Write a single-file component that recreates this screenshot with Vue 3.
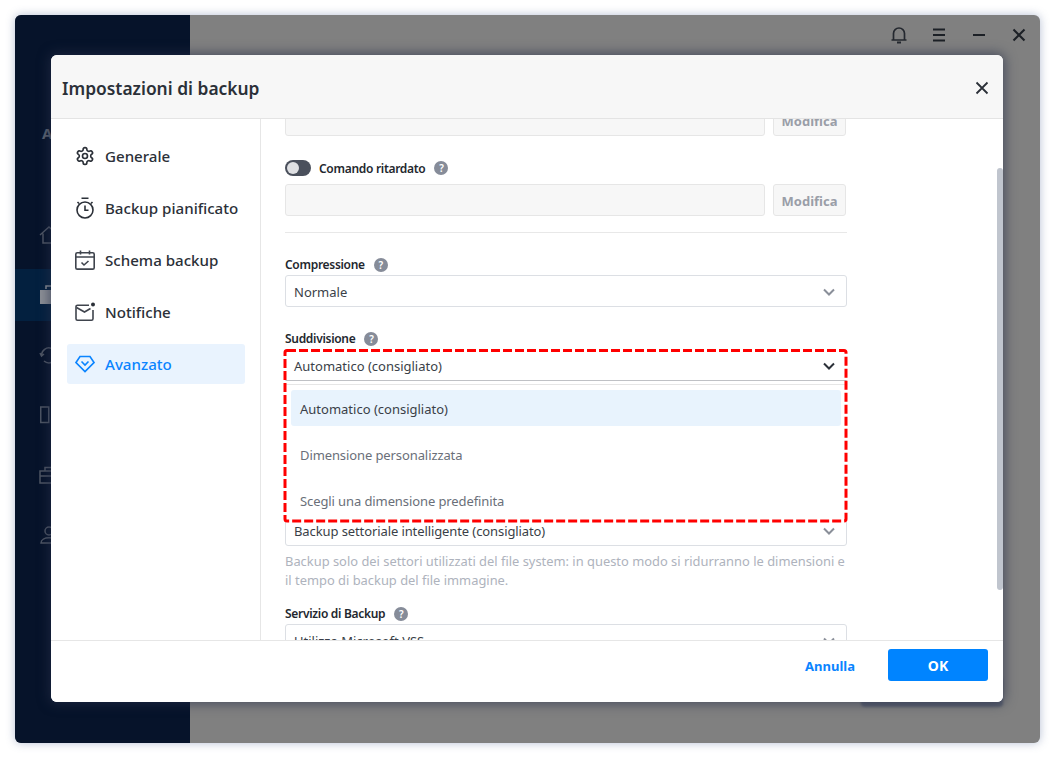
<script setup>
const options = ['Automatico (consigliato)', 'Dimensione personalizzata', 'Scegli una dimensione predefinita']
</script>

<template>
  <div class="page">
    <div class="window">
      <aside class="rail">
        <div class="brand">A</div>
        <nav class="rail-nav">
          <div class="rail-item">
            <svg width="20" height="20" viewBox="0 0 20 20" fill="none" stroke="#4d5563" stroke-width="1.5"><path d="M1 10 10 2l9 8M4 8.500V18h12V8.500"/></svg>
          </div>
          <div class="rail-item">
            <div class="rail-active">
              <svg width="22" height="20" viewBox="0 0 22 20"><path d="M1 5h20v14H1z" fill="#8b8f96"/><path d="M7 4V1h8v3" fill="none" stroke="#8b8f96" stroke-width="1.500"/></svg>
            </div>
          </div>
          <div class="rail-item">
            <svg width="20" height="20" viewBox="0 0 20 20" fill="none" stroke="#4d5563" stroke-width="1.500"><path d="M2.500 10a7.500 7.500 0 1 1 2.500 6M1 8l1.500 3L5 9"/></svg>
          </div>
          <div class="rail-item">
            <svg width="20" height="20" viewBox="0 0 20 20" fill="none" stroke="#4d5563" stroke-width="1.500"><rect x="1.750" y="2" width="8" height="15.500"/></svg>
          </div>
          <div class="rail-item">
            <svg width="20" height="20" viewBox="0 0 20 20" fill="none" stroke="#4d5563" stroke-width="1.500"><rect x="1" y="6" width="18" height="12"/><path d="M6 6V2.500h8V6M1 11h18"/></svg>
          </div>
          <div class="rail-item">
            <svg width="20" height="20" viewBox="0 0 20 20" fill="none" stroke="#4d5563" stroke-width="1.500"><circle cx="10" cy="6" r="4"/><path d="M2 18c0-7 16-7 16 0z"/></svg>
          </div>
        </nav>
      </aside>

      <main class="backdrop">
        <div class="topbar">
          <svg width="20" height="20" viewBox="0 0 20 20" fill="none" stroke="#24282f" stroke-width="1.700"><path d="M4.500 14.500V8.500a5.500 5.500 0 0 1 11 0v6M2.500 15h15"/><path d="M8 17.500h4" stroke-width="2"/></svg>
          <svg width="20" height="20" viewBox="0 0 20 20" stroke="#1c2026" stroke-width="1.900"><path d="M4 4.500h12M4 10h12M4 15.500h12"/></svg>
          <svg width="20" height="20" viewBox="0 0 20 20" stroke="#1c2026" stroke-width="1.900"><path d="M4 10h12"/></svg>
          <svg width="20" height="20" viewBox="0 0 20 20" stroke="#1c2026" stroke-width="2.100"><path d="M4.500 4.500l11 11M15.500 4.500l-11 11"/></svg>
        </div>
        <div class="under-button"></div>
      </main>

      <section class="dialog">
        <header class="dialog-head">
          <h1>Impostazioni di backup</h1>
          <svg width="14" height="14" viewBox="0 0 14 14" stroke="#2b3038" stroke-width="1.800"><path d="M1.500 1.500l11 11M12.500 1.500l-11 11"/></svg>
        </header>

        <div class="dialog-body">
          <ul class="menu">
            <li class="menu-item">
              <svg width="20" height="20" viewBox="0 0 24 24" fill="none" stroke="#2b3038" stroke-width="2"><path d="M12.220 2h-.44a2 2 0 0 0-2 2v.18a2 2 0 0 1-1 1.730l-.43.25a2 2 0 0 1-2 0l-.15-.08a2 2 0 0 0-2.730.73l-.22.38a2 2 0 0 0 .73 2.730l.15.1a2 2 0 0 1 1 1.720v.51a2 2 0 0 1-1 1.740l-.15.09a2 2 0 0 0-.73 2.730l.22.38a2 2 0 0 0 2.730.73l.15-.08a2 2 0 0 1 2 0l.43.25a2 2 0 0 1 1 1.730V20a2 2 0 0 0 2 2h.44a2 2 0 0 0 2-2v-.18a2 2 0 0 1 1-1.730l.43-.25a2 2 0 0 1 2 0l.15.08a2 2 0 0 0 2.730-.73l.22-.39a2 2 0 0 0-.73-2.730l-.15-.08a2 2 0 0 1-1-1.740v-.5a2 2 0 0 1 1-1.740l.15-.09a2 2 0 0 0 .73-2.730l-.22-.38a2 2 0 0 0-2.730-.73l-.15.08a2 2 0 0 1-2 0l-.43-.25a2 2 0 0 1-1-1.730V4a2 2 0 0 0-2-2z"/><circle cx="12" cy="12" r="3"/></svg>
              Generale
            </li>
            <li class="menu-item">
              <svg width="20" height="22" viewBox="0 0 20 22" fill="none" stroke="#2b3038" stroke-width="1.600"><circle cx="10" cy="13" r="8"/><path d="M6.500 1.250h7M10 8.500v4.750h3.500M2.500 5l1.500 1.500M17.500 5L16 6.500"/></svg>
              Backup pianificato
            </li>
            <li class="menu-item">
              <svg width="20" height="20" viewBox="0 0 20 20" fill="none" stroke="#3f444d" stroke-width="1.600"><rect x=".8" y="2.750" width="18.400" height="16.400" rx="1.500"/><path d="M.8 7h18.400M5.500 .5v4M14.500 .5v4M6.500 12.500l2.500 2.500 4.500-4"/></svg>
              Schema backup
            </li>
            <li class="menu-item">
              <svg width="20" height="20" viewBox="0 0 20 20" fill="none" stroke="#3f444d" stroke-width="1.600"><path d="M14 3.250H2.500a1.500 1.500 0 0 0-1.500 1.500v12a1.500 1.500 0 0 0 1.500 1.500h14a1.500 1.500 0 0 0 1.500-1.500V8"/><path d="M1.500 5.500l8 4.500 6-3.500"/><circle cx="18" cy="2.500" r="2" fill="#2b3038" stroke="none"/></svg>
              Notifiche
            </li>
            <li class="menu-item active">
              <svg width="20" height="20" viewBox="0 0 20 20" fill="none" stroke="#0a84ff" stroke-width="1.600"><path d="M5 2.500h10L19 8.500 10 17.500 1 8.500z"/><path d="M6.500 7.500L10 11l3.500-3.500"/></svg>
              Avanzato
            </li>
          </ul>

          <div class="content">
            <div class="scroller">
              <div class="input-row first">
                <div class="input"></div>
                <button class="edit">Modifica</button>
              </div>

              <div class="field-label toggle-row">
                <span class="toggle"><i></i></span>
                <span>Comando ritardato</span>
                <span class="help">?</span>
              </div>
              <div class="input-row">
                <div class="input"></div>
                <button class="edit">Modifica</button>
              </div>
              <hr class="rule" />

              <div class="field-label section">
                <span>Compressione</span>
                <span class="help">?</span>
              </div>
              <div class="select">
                <span>Normale</span>
                <svg class="chev" width="12" height="8" viewBox="0 0 12 8" fill="none" stroke="#8a8f99" stroke-width="2"><path d="M1 1.500l5 5 5-5"/></svg>
              </div>

              <div class="field-label section">
                <span>Suddivisione</span>
                <span class="help">?</span>
              </div>
              <div class="dropdown-wrap">
                <div class="select open">
                  <span>Automatico (consigliato)</span>
                  <svg class="chev" width="12" height="8" viewBox="0 0 12 8" fill="none" stroke="#2b3038" stroke-width="2"><path d="M1 1.500l5 5 5-5"/></svg>
                </div>
                <ul class="dropdown">
                  <li v-for="(o, i) in options" :key="o" :class="{ current: i === 0 }">{{ o }}</li>
                </ul>
                <svg class="highlight" width="566" height="175" viewBox="0 0 566 175" fill="none" stroke="#f00" stroke-width="3" stroke-dasharray="9 3"><rect x="2" y="1.500" width="561" height="170.500" rx="2"/></svg>
              </div>

              <div class="select after-menu">
                <span>Backup settoriale intelligente (consigliato)</span>
                <svg class="chev" width="12" height="8" viewBox="0 0 12 8" fill="none" stroke="#8a8f99" stroke-width="2"><path d="M1 1.500l5 5 5-5"/></svg>
              </div>
              <p class="hint">Backup solo dei settori utilizzati del file system: in questo modo si ridurranno le dimensioni e il tempo di backup del file immagine.</p>

              <div class="field-label service">
                <span>Servizio di Backup</span>
                <span class="help">?</span>
              </div>
              <div class="select">
                <span>Utilizza Microsoft VSS</span>
                <svg class="chev" width="12" height="8" viewBox="0 0 12 8" fill="none" stroke="#8a8f99" stroke-width="2"><path d="M1 1.500l5 5 5-5"/></svg>
              </div>
            </div>
            <div class="scrollbar"></div>
          </div>
        </div>

        <footer class="dialog-foot">
          <button class="cancel">Annulla</button>
          <button class="ok">OK</button>
        </footer>
      </section>
    </div>
  </div>
</template>

<style>
html, body { margin: 0; background: #fff; }
</style>

<style scoped>
* { box-sizing: border-box; }
.page {
  width: 1055px;
  height: 758px;
  padding: 15px;
  overflow: hidden;
  font-family: "Noto Sans", "Open Sans", sans-serif;
  color: #2b3038;
}
.window {
  position: relative;
  width: 1025px;
  height: 728px;
  display: flex;
  border-radius: 6px;
  overflow: hidden;
  box-shadow: 0 0 10px rgba(95, 115, 160, .45);
  background: #808080;
}
.rail {
  width: 175px;
  flex: none;
  background: #06132a;
  padding-top: 106px;
}
.brand {
  padding-left: 27px;
  height: 24px;
  line-height: 24px;
  font-size: 15px;
  font-weight: 700;
  color: #5a626f;
}
.rail-nav {
  margin-top: 60px;
  display: flex;
  flex-direction: column;
}
.rail-item {
  height: 60px;
  display: flex;
  align-items: center;
  padding-left: 24px;
  position: relative;
}
.rail-active {
  position: absolute;
  left: 0;
  right: 0;
  top: 4px;
  height: 52px;
  background: #03203f;
  display: flex;
  align-items: center;
  padding-left: 24px;
}
.backdrop {
  flex: 1;
  position: relative;
}
.topbar {
  height: 40px;
  display: flex;
  justify-content: flex-end;
  align-items: center;
  gap: 20px;
  padding-right: 11px;
}
.under-button {
  position: absolute;
  right: 37px;
  bottom: 36px;
  width: 142px;
  height: 30px;
  border-radius: 4px;
  background: #5a5f6d;
  filter: blur(1px);
}
.dialog {
  position: absolute;
  left: 36px;
  top: 40px;
  width: 952px;
  height: 647px;
  background: #fff;
  border-radius: 6px;
  overflow: hidden;
  display: flex;
  flex-direction: column;
  box-shadow: 0 0 12px 2px rgba(38, 46, 72, .62);
}
.dialog-head {
  height: 64px;
  flex: none;
  background: #f7f7f7;
  border-bottom: 1px solid #e4e4e4;
  display: flex;
  align-items: center;
  justify-content: space-between;
  padding: 2px 14px 0 11px;
}
.dialog-head h1 {
  margin: 0;
  font-size: 17.4px;
  font-weight: 600;
  color: #2b3038;
}
.dialog-body {
  flex: 1;
  min-height: 0;
  display: flex;
}
.menu {
  width: 210px;
  flex: none;
  margin: 0;
  padding: 17px 15px 0 16px;
  list-style: none;
  border-right: 1px solid #e6e6e6;
  display: flex;
  flex-direction: column;
  gap: 12px;
}
.menu-item {
  height: 40px;
  display: flex;
  align-items: center;
  gap: 10px;
  padding-left: 8px;
  font-size: 15.1px;
  font-weight: 500;
  border-radius: 3px;
}
.menu-item.active {
  background: #e9f3fe;
  color: #0a84ff;
}
.content {
  flex: 1;
  position: relative;
  overflow: hidden;
}
.scroller {
  width: 562px;
  margin: -15px 0 0 24px;
}
.input-row {
  display: flex;
  gap: 8px;
  padding-right: 1px;
}
.input {
  flex: 1;
  height: 32px;
  background: #f7f7f7;
  border: 1px solid #e6e6e6;
  border-radius: 3px;
}
.edit {
  width: 73px;
  height: 32px;
  padding: 1px 0 0;
  background: #f7f7f7;
  border: 1px solid #e6e6e6;
  border-radius: 3px;
  font: 700 13px "Noto Sans", sans-serif;
  color: #9a9ea8;
}
.field-label {
  display: flex;
  align-items: center;
  height: 20px;
  padding-bottom: 1px;
  font-size: 12px;
  font-weight: 600;
  letter-spacing: -.3px;
  color: #23272e;
}
.help {
  width: 14px;
  height: 14px;
  margin-left: 9px;
  border-radius: 50%;
  background: #868c99;
  color: #fff;
  font-size: 10px;
  line-height: 14px;
  text-align: center;
  letter-spacing: 0;
}
.toggle-row { margin-top: 22px; margin-bottom: 6px; padding-bottom: 0; }
.toggle {
  width: 26px;
  height: 16px;
  border-radius: 8px;
  background: #4a505c;
  margin-right: 8px;
  padding: 2px;
}
.toggle i {
  display: block;
  width: 12px;
  height: 12px;
  border-radius: 50%;
  background: #dfe0e3;
}
.rule {
  margin: 16px 0 0;
  border: 0;
  border-top: 1px solid #e8e8e8;
}
.section { margin-top: 22px; }
.select {
  position: relative;
  height: 32px;
  border: 1px solid #dcdfe4;
  border-radius: 3px;
  background: #fff;
  display: flex;
  align-items: center;
  justify-content: space-between;
  padding: 1px 11px 0 8px;
  font-size: 13px;
  color: #3a3f48;
}
.select.open {
  border-color: transparent;
  border-bottom-color: #bfc1c5;
  border-radius: 0;
}
.dropdown-wrap { position: relative; }
.dropdown {
  position: absolute;
  left: 0;
  right: 0;
  top: 35px;
  height: 138px;
  margin: 0;
  padding: 5px 6px 0;
  list-style: none;
  background: #fff;
  border-top: 1px solid #e6e6e6;
  display: flex;
  flex-direction: column;
  gap: 10px;
  z-index: 2;
}
.dropdown li {
  height: 36px;
  line-height: 38px;
  padding-left: 9px;
  font-size: 13px;
  color: #6a6f79;
  border-radius: 3px;
  letter-spacing: -.1px;
}
.dropdown li.current {
  background: #e8f3fd;
  color: #3a3f48;
  letter-spacing: 0;
}
.highlight {
  position: absolute;
  left: -2px;
  top: 0;
  z-index: 3;
  pointer-events: none;
}
.after-menu { margin-top: 133px; letter-spacing: -.1px; }
.hint {
  margin: 6px 0 0;
  font-size: 12.9px;
  line-height: 19px;
  color: #aeb3bd;
}
.service { margin-top: 14px; }
.scrollbar {
  position: absolute;
  right: 0;
  top: 49px;
  width: 6px;
  height: 422px;
  border-radius: 3px;
  background: #c0c5ce;
}
.dialog-foot {
  height: 62px;
  flex: none;
  border-top: 1px solid #e6e6e6;
  background: #fff;
  display: flex;
  align-items: flex-start;
  justify-content: flex-end;
  gap: 33px;
  padding: 8px 15px 0 0;
  position: relative;
}
.cancel {
  height: 32px;
  padding: 1px 0 0;
  border: 0;
  background: none;
  color: #0a84ff;
  font: 700 13px "Noto Sans", sans-serif;
}
.ok {
  width: 100px;
  height: 32px;
  border: 0;
  border-radius: 3px;
  background: #0084ff;
  color: #fff;
  font: 700 14px "Noto Sans", sans-serif;
}
</style>
